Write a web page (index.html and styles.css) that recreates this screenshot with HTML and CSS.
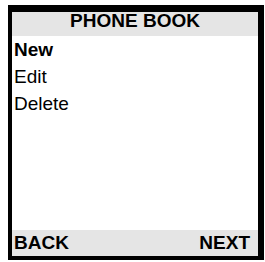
FILE: index.html
```html
<!DOCTYPE html>
<html><head>
  <meta charset="utf-8">
  <title>Phone book</title>
  <link rel="stylesheet" href="styles.css">
</head>
<body>

<div class="screen">
  <div class="title">PHONE BOOK</div>
  <ul class="menu">
    <li class="sel">New</li>
    <li>Edit</li>
    <li>Delete</li>
  </ul>
  <div class="keys">
    <span>BACK</span>
    <span>NEXT</span>
  </div>
</div>

</body></html>
```

FILE: styles.css
```css
body,html { color:black; background:white; font:19px "Liberation Sans", Arial, sans-serif; padding:0; margin:0; }

.screen {
  display: flex;
  flex-direction: column;
  width: 246px;
  height: 244px;
  margin: 5px 0 0 8px;
  border-style: solid;
  border-color: black;
  border-width: 7px 6px 4px 4px;
  background: white;
}

.title {
  height: 18px;
  line-height: 18px;
  padding-bottom: 6px;
  background: #e5e5e5;
  font-weight: bold;
  text-align: center;
}

.menu {
  flex: 1;
  list-style: none;
  margin: 0;
  padding: 0 0 0 2px;
  line-height: 27px;
}
.menu .sel {
  font-weight: bold;
}

.keys {
  display: flex;
  justify-content: space-between;
  height: 26px;
  line-height: 26px;
  padding: 0 8px 0 2px;
  background: #e5e5e5;
  font-weight: bold;
}
```
